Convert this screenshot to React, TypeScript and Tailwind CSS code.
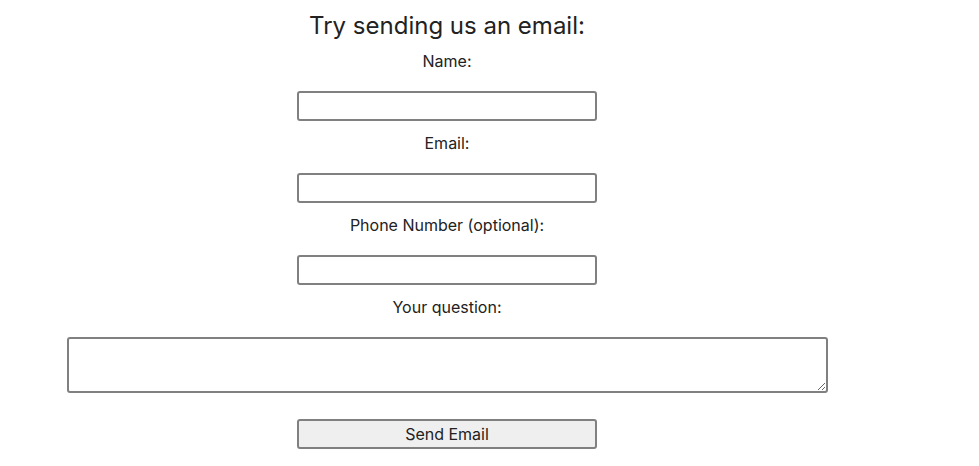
export default function App() {
  return (
    <div className="w-[979px] h-[466px] bg-white overflow-hidden" style={{ fontFamily: 'Inter, "Noto Sans", sans-serif' }}>
      <form className="w-[894px] flex flex-col items-center text-[#222]">
        <h2 className="mt-[10px] text-[24px] leading-[32px] font-normal">Try sending us an email:</h2>
        <label className="mt-[7px] text-[16px] leading-[24px]">Name:</label>
        <input type="text" className="mt-[18px] w-[300px] h-[30px] border-2 border-[#808080] rounded-[3px]" />
        <label className="mt-[10px] text-[16px] leading-[24px]">Email:</label>
        <input type="email" className="mt-[18px] w-[300px] h-[30px] border-2 border-[#808080] rounded-[3px]" />
        <label className="mt-[10px] text-[16px] leading-[24px]">Phone Number (optional):</label>
        <input type="tel" className="mt-[18px] w-[300px] h-[30px] border-2 border-[#808080] rounded-[3px]" />
        <label className="mt-[10px] text-[16px] leading-[24px]">Your question:</label>
        <textarea className="mt-[18px] w-[761px] h-[56px] border-2 border-[#808080] rounded-[3px] resize" />
        <button type="button" className="mt-[26px] w-[300px] h-[30px] border-2 border-[#808080] rounded-[3px] bg-[#efefef] text-[16px]">
          Send Email
        </button>
      </form>
    </div>
  )
}
